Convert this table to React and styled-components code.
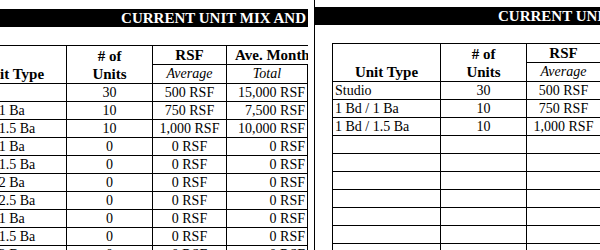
import styled, { createGlobalStyle } from "styled-components";

const GlobalStyle = createGlobalStyle`
  html, body { margin: 0; padding: 0; background: #fff; }
  body {
    font-family: "Liberation Serif", "Times New Roman", serif;
    color: #000;
  }
`;

const Page = styled.div`
  display: flex;
  gap: 6px;
  width: 600px;
  height: 250px;
  overflow: hidden;
`;

const Panel = styled.section`
  flex: ${(p) => (p.$width ? `0 0 ${p.$width}px` : "1 1 0")};
  min-width: 0;
  overflow: hidden;
  padding-top: ${(p) => p.$top}px;
  border-left: ${(p) => (p.$edge ? "1px solid #000" : "none")};
`;

const TitleBar = styled.div`
  display: flex;
  align-items: center;
  justify-content: ${(p) => (p.$align === "end" ? "flex-end" : "flex-start")};
  height: 18px;
  padding: ${(p) => (p.$align === "end" ? "0 2px 0 0" : `0 0 0 ${p.$inset}px`)};
  background: #000;
  color: #fff;
  font-size: 15px;
  font-weight: bold;
  white-space: nowrap;
  overflow: hidden;
`;

const Sheet = styled.div`
  margin-top: 18px;
  margin-left: ${(p) => p.$shift}px;
`;

const Table = styled.table`
  width: 349px;
  min-width: 349px;
  border-collapse: collapse;
  table-layout: fixed;
  font-size: 14px;
`;

const Head = styled.th`
  border: 1px solid #000;
  border-right: ${(p) => (p.$open ? "none" : "1px solid #000")};
  padding: ${(p) => (p.$inset ? `0 0 0 ${p.$inset}px` : "0")};
  height: 17px;
  line-height: 18px;
  font-size: 15px;
  font-weight: bold;
  text-align: ${(p) => (p.$inset ? "left" : "center")};
  vertical-align: ${(p) => (p.$bottom ? "bottom" : "middle")};
  white-space: nowrap;
  overflow: hidden;
`;

const Sub = styled.th`
  border: 1px solid #000;
  padding: 0;
  height: 18px;
  font-style: italic;
  font-weight: normal;
  font-size: 14px;
  text-align: center;
`;

const Cell = styled.td`
  border: 1px solid #000;
  height: 17px;
  line-height: 17px;
  padding: 0 2px;
  white-space: nowrap;
  overflow: hidden;
  text-align: ${(p) => p.$align || "left"};
`;

const rows = [
  ["Studio", "30", "500 RSF", "15,000 RSF"],
  ["1 Bd / 1 Ba", "10", "750 RSF", "7,500 RSF"],
  ["1 Bd / 1.5 Ba", "10", "1,000 RSF", "10,000 RSF"],
  ["2 Bd / 1 Ba", "0", "0 RSF", "0 RSF"],
  ["2 Bd / 1.5 Ba", "0", "0 RSF", "0 RSF"],
  ["2 Bd / 2 Ba", "0", "0 RSF", "0 RSF"],
  ["2 Bd / 2.5 Ba", "0", "0 RSF", "0 RSF"],
  ["3 Bd / 1 Ba", "0", "0 RSF", "0 RSF"],
  ["3 Bd / 1.5 Ba", "0", "0 RSF", "0 RSF"],
  ["3 Bd / 2 Ba", "0", "0 RSF", "0 RSF"],
];

const blank = ["", "", "", ""];
const rightRows = rows.map((r, i) => (i < 3 ? [r[0], r[1], r[2], ""] : blank));

function UnitMix({ data }) {
  return (
    <Table>
      <colgroup>
        <col style={{ width: 108 }} />
        <col style={{ width: 86 }} />
        <col style={{ width: 74 }} />
        <col style={{ width: 81 }} />
      </colgroup>
      <thead>
        <tr>
          <Head rowSpan={2} $bottom>Unit Type</Head>
          <Head rowSpan={2}>
            # of
            <br />
            Units
          </Head>
          <Head $open>RSF</Head>
          <Head $open $inset={8}>Ave. Monthly Rent</Head>
        </tr>
        <tr>
          <Sub>Average</Sub>
          <Sub>Total</Sub>
        </tr>
      </thead>
      <tbody>
        {data.map((r, i) => (
          <tr key={i}>
            <Cell>{r[0]}</Cell>
            <Cell $align="center">{r[1]}</Cell>
            <Cell $align="center">{r[2]}</Cell>
            <Cell $align="right">{r[3]}</Cell>
          </tr>
        ))}
      </tbody>
    </Table>
  );
}

export default function App() {
  return (
    <>
      <GlobalStyle />
      <Page>
        <Panel $width={308} $top={9}>
          <TitleBar $align="end">CURRENT UNIT MIX AND</TitleBar>
          <Sheet $shift={-42}>
            <UnitMix data={rows} />
          </Sheet>
        </Panel>
        <Panel $top={7} $edge>
          <TitleBar $inset={183}>CURRENT UNIT MIX AND RENT</TitleBar>
          <Sheet $shift={17}>
            <UnitMix data={rightRows} />
          </Sheet>
        </Panel>
      </Page>
    </>
  );
}
